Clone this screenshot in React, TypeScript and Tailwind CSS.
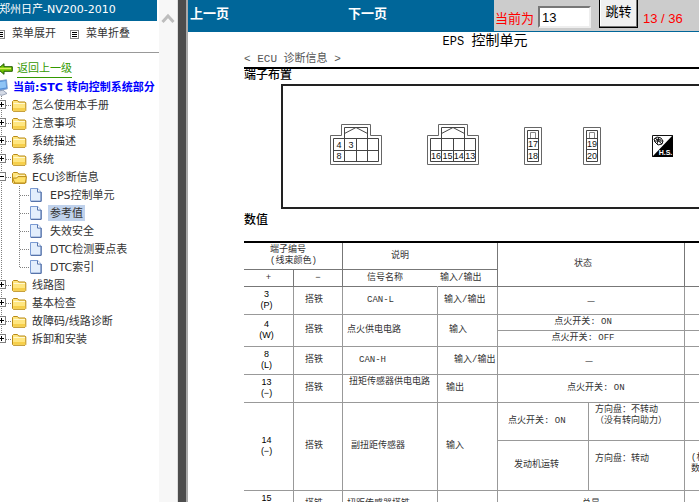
import { ReactNode, useState } from 'react';
import clsx from 'clsx';

const sections = ['怎么使用本手册', '注意事项', '系统描述', '系统', 'ECU诊断信息', '线路图', '基本检查', '故障码/线路诊断', '拆卸和安装'];
const ecuPages = ['EPS控制单元', '参考值', '失效安全', 'DTC检测要点表', 'DTC索引'];

function MenuIcon() {
  return (
    <svg width="9" height="9" viewBox="0 0 9 9" className="shrink-0" shapeRendering="crispEdges">
      <rect x="0.5" y="0.5" width="8" height="8" fill="#fff" stroke="#888" />
      <path d="M2 2.5h5M2 4.5h5M2 6.5h5" stroke="#000" />
    </svg>
  );
}

function BackIcon() {
  return (
    <svg width="16" height="12" viewBox="0 0 16 12" className="-ml-[3px] shrink-0">
      <path d="M7 .7v3h8.3v4.6H7v3L.8 6z" fill="#6fc400" stroke="#1f5a00" />
      <path d="M3 5.5h11" stroke="#d8f25a" strokeWidth="1.5" />
    </svg>
  );
}

function ComputerIcon() {
  return (
    <svg width="12" height="17" viewBox="0 0 12 17" className="-ml-1 shrink-0">
      <path d="M0 2.5 10.5.8l.8 9L0 12z" fill="#4f8ed8" stroke="#7c9fd0" />
      <path d="M1 3.5 9.6 2l.5 6.5L1 10z" fill="#8fc4f5" />
      <path d="M2 12.2l5-1 4 3.3-5 1.8-5-1z" fill="#d5dbe6" stroke="#8490a8" strokeWidth=".8" />
    </svg>
  );
}

function Folder({ open }: { open?: boolean }) {
  return (
    <svg width="15" height="13" viewBox="0 0 15 13" className="shrink-0">
      <path d="M.5 11.5v-9l1-1h4l1.2 1.5h6.3l.8.8v7.7l-.8.8H1.3z" fill="#ffe680" stroke="#b98a16" />
      {open ? (
        <>
          <path d="M3.5 6.2h9.5v-2H5L3.5 5.5z" fill="#fff5c4" />
          <path d="M2.8 12 .6 7.1h4l1.3-1.5h8.5L13.5 12z" fill="#ffe169" stroke="#b98a16" />
        </>
      ) : (
        <>
          <path d="M1.5 4.5h11.5" stroke="#fff8cf" />
          <path d="M1.2 9h12v2.6h-12z" fill="#f7cf4a" />
        </>
      )}
    </svg>
  );
}

function PageIcon() {
  return (
    <svg width="12" height="14" viewBox="0 0 12 14" className="shrink-0">
      <path d="M.5.5h7.2l3.3 3.3v9.4H.5z" fill="#e3eefc" stroke="#7b9bd3" />
      <path d="M7.5.5v3.6H11" fill="#fff" stroke="#5575ae" />
      <path d="M11.2 4v9.4H1" fill="none" stroke="#4f6ba3" />
    </svg>
  );
}

function Branch({ open, last }: { open?: boolean; last?: boolean }) {
  return (
    <svg width="12" height="18" viewBox="0 0 12 18" className="shrink-0" shapeRendering="crispEdges">
      <path d={last ? 'M1.5 0v9' : 'M1.5 0v18'} stroke="#808080" strokeDasharray="1 1" />
      <path d="M6 9.5h6" stroke="#808080" strokeDasharray="1 1" />
      <rect x="-2.5" y="4.5" width="8" height="8" fill="#fff" stroke="#808080" />
      <path d={open ? 'M-1 8.5h5' : 'M-1 8.5h5M1.5 6v5'} stroke="#000" />
    </svg>
  );
}

function LeafBranch({ last }: { last?: boolean }) {
  return (
    <svg width="30" height="18" viewBox="0 0 30 18" className="shrink-0" shapeRendering="crispEdges">
      <path d="M1.5 0v18M20 9.5h10" stroke="#808080" strokeDasharray="1 1" />
      <path d={last ? 'M19.5 0v10' : 'M19.5 0v18'} stroke="#808080" strokeDasharray="1 1" />
    </svg>
  );
}

function Sidebar() {
  const [current, setCurrent] = useState('参考值');

  return (
    <nav className="w-[159px] shrink-0 overflow-hidden whitespace-nowrap bg-white font-['DejaVu_Sans','Noto_Sans_CJK_SC',sans-serif] text-[11px] leading-4 text-[#333]">
      <h1 className="mr-[2px] h-[21px] bg-[#006699] leading-5 text-white">
        <span className="-ml-px">郑州日产-NV200-2010</span>
      </h1>
      <div className="mb-[7px] flex h-6 items-center">
        <button className="-ml-1 flex items-center gap-[7px] pt-[2px]"><MenuIcon />菜单展开</button>
        <button className="ml-[14px] flex items-center gap-[7px] pt-[2px]"><MenuIcon />菜单折叠</button>
      </div>
      <hr className="border-[#999]" />
      <a href="#back" className="mt-[7px] flex h-[18px] items-center gap-1 text-[#339900]">
        <BackIcon />
        <span className="border-b border-[#339900]">返回上一级</span>
      </a>
      <div className="flex h-[18px] items-center gap-[5px] font-bold text-[#0000ff]">
        <ComputerIcon />
        <span className="pt-[2px]">当前:STC 转向控制系统部分</span>
      </div>
      <ul>
        {sections.map((name, i) => {
          const open = name === 'ECU诊断信息';
          return (
            <li key={name}>
              <a href="#section" className="flex h-[18px] items-center">
                <Branch open={open} last={i === sections.length - 1} />
                <Folder open={open} />
                <span className="ml-[5px] pt-[2px] leading-[14px]">{name}</span>
              </a>
              {open && (
                <ul>
                  {ecuPages.map((page, j) => (
                    <li key={page}>
                      <a href="#page" onClick={() => setCurrent(page)} className="flex h-[18px] items-center">
                        <LeafBranch last={j === ecuPages.length - 1} />
                        <PageIcon />
                        <span className={clsx('ml-[6px] px-[2px] pt-[2px] leading-[14px]', page === current && 'bg-[#c0d2ec]')}>
                          {page}
                        </span>
                      </a>
                    </li>
                  ))}
                </ul>
              )}
            </li>
          );
        })}
      </ul>
    </nav>
  );
}

function TopBar() {
  return (
    <header className="grid h-8 grid-cols-[158px_148px_1fr] bg-[#006699] font-['Liberation_Sans','Noto_Sans_CJK_SC',sans-serif] text-[13px]">
      <a href="#prev" className="pl-[2px] leading-7 font-bold text-white">上一页</a>
      <a href="#next" className="pl-[2px] leading-7 font-bold text-white">下一页</a>
      <form className="mb-px flex items-start overflow-hidden whitespace-nowrap bg-[#cccccc] text-[#ff0000]">
        <label htmlFor="page" className="ml-px w-[43px] pt-[9px] leading-5">当前为</label>
        <input
          id="page"
          defaultValue="13"
          className="mt-[6px] h-[22px] w-[53px] border-2 border-t-[#777] border-r-[#eee] border-b-[#eee] border-l-[#777] bg-white px-[2px] text-black"
        />
        <button
          type="button"
          className="ml-2 h-7 w-[39px] border border-t-0 border-black bg-[#f0f0f0] pb-1 text-black shadow-[inset_-1px_-1px_0_#777,inset_1px_0_0_#fff]"
        >
          跳转
        </button>
        <span className="ml-[5px] pt-[9px] leading-5">13 / 36</span>
      </form>
    </header>
  );
}

function WideConnector({ top, bottom }: { top: string[]; bottom: string[] }) {
  return (
    <svg width="52" height="41" viewBox="0 0 52 41" fill="none" stroke="#444" className="font-['Liberation_Sans',sans-serif] text-[9px]">
      <path d="M.5 40.5v-29h11V.5h29v11h11v29z" stroke="#666" />
      <path d="M3.5 14.5h45v23h-45zM3.5 26.5h45M14.5 3.5v34M26.5 14.5v23M37.5 3.5v34M14.5 3.5h23" />
      <path d="M14.5 9.5 26 3.5l11.5 6" />
      <g fill="#111" stroke="none" textAnchor="middle">
        {top.map((t, i) => <text key={i} x={9 + i * 12} y="23.5">{t}</text>)}
        {bottom.map((t, i) => <text key={i} x={9 + i * 11.4} y="35">{t}</text>)}
      </g>
    </svg>
  );
}

function NarrowConnector({ pins }: { pins: string[] }) {
  return (
    <svg width="18" height="38" viewBox="0 0 18 38" fill="none" stroke="#444" className="font-['Liberation_Sans',sans-serif] text-[9px]">
      <path d="M.5.5h17v37H.5z" stroke="#666" />
      <path d="M3.5 3.5h11v31h-11zM3.5 11.5h11M3.5 22.5h11" />
      <path d="M6.5 11V5.5h5V11" stroke="#888" />
      <g fill="#111" stroke="none" textAnchor="middle">
        <text x="9" y="20">{pins[0]}</text>
        <text x="9" y="32">{pins[1]}</text>
      </g>
    </svg>
  );
}

function HarnessSide() {
  return (
    <svg width="21" height="22" viewBox="0 0 21 22" className="mb-2 ml-[51px]">
      <path d="M.5.5h20v21H.5z" fill="#fff" stroke="#111" />
      <path d="M21 0v22H0z" fill="#000" />
      <path d="M2 4l3-2 4 1 2 3-1 3-4 1-3-3zM3 3l7 6M7 2 5 9M2 6h9M4 4l5 1" fill="none" stroke="#111" />
      <text x="13.5" y="19.5" textAnchor="middle" fill="#fff" className="font-['Liberation_Sans',sans-serif] text-[7px] font-bold">H.S.</text>
    </svg>
  );
}

type CellProps = { children?: ReactNode; className?: string; colSpan?: number; rowSpan?: number };

function Cell({ className, ...rest }: CellProps) {
  return <td className={clsx('border-r border-b border-[#999]', className)} {...rest} />;
}

function Head({ className, ...rest }: CellProps) {
  return <th className={clsx('border-r border-b border-[#777] font-normal', className)} {...rest} />;
}

function Terminal({ pin, wire, rowSpan }: { pin: string; wire?: string; rowSpan?: number }) {
  return (
    <>
      <Cell rowSpan={rowSpan} className="pr-1 pb-[2px] text-center font-['Liberation_Sans',sans-serif] leading-[11px] text-black">
        {pin}
        <br />
        {wire}
      </Cell>
      <Cell rowSpan={rowSpan} className="pl-[11px]">搭铁</Cell>
    </>
  );
}

function ValueTable() {
  return (
    <table className="w-full table-fixed border-separate border-spacing-0 border-t-2 border-black text-left text-[9px] leading-[11px] whitespace-nowrap text-[#333]">
      <colgroup>
        <col className="w-[50px]" />
        <col className="w-[49px]" />
        <col className="w-[95px]" />
        <col className="w-[60px]" />
        <col className="w-[91px]" />
        <col className="w-[96px]" />
        <col />
      </colgroup>
      <thead>
        <tr className="h-[27px]">
          <Head colSpan={2} className="pl-[26px]">端子编号<br />(线束颜色)</Head>
          <Head colSpan={2} className="pl-12">说明</Head>
          <Head colSpan={2} rowSpan={2} className="pr-4 text-center">状态</Head>
          <Head rowSpan={2} />
        </tr>
        <tr className="h-[17px]">
          <Head className="text-center">+</Head>
          <Head className="text-center">−</Head>
          <Head className="border-r-transparent pl-6">信号名称</Head>
          <Head className="pl-[2px]">输入/输出</Head>
        </tr>
      </thead>
      <tbody>
        <tr className="h-[28px]">
          <Terminal pin="3" wire="(P)" />
          <Cell className="pl-6">CAN-L</Cell>
          <Cell className="pl-[6px]">输入/输出</Cell>
          <Cell colSpan={2} className="text-center font-['Noto_Sans_CJK_SC',sans-serif]">—</Cell>
          <Cell />
        </tr>
        <tr className="h-4">
          <Terminal pin="4" wire="(W)" rowSpan={2} />
          <Cell rowSpan={2} className="pl-1">点火供电电路</Cell>
          <Cell rowSpan={2} className="pl-[11px]">输入</Cell>
          <Cell colSpan={2} className="pr-4 text-center">点火开关: ON</Cell>
          <Cell />
        </tr>
        <tr className="h-4">
          <Cell colSpan={2} className="pr-4 text-center">点火开关: OFF</Cell>
          <Cell />
        </tr>
        <tr className="h-[28px]">
          <Terminal pin="8" wire="(L)" />
          <Cell className="pl-4">CAN-H</Cell>
          <Cell className="pl-4">输入/输出</Cell>
          <Cell colSpan={2} className="pr-1 text-center font-['Noto_Sans_CJK_SC',sans-serif]">—</Cell>
          <Cell />
        </tr>
        <tr className="h-[28px]">
          <Terminal pin="13" wire="(−)" />
          <Cell className="pb-3 pl-[6px]">扭矩传感器供电电路</Cell>
          <Cell className="pl-2">输出</Cell>
          <Cell colSpan={2} className="pl-[69px]">点火开关: ON</Cell>
          <Cell />
        </tr>
        <tr className="h-[38px]">
          <Terminal pin="14" wire="(−)" rowSpan={2} />
          <Cell rowSpan={2} className="pl-2">副扭距传感器</Cell>
          <Cell rowSpan={2} className="pl-2">输入</Cell>
          <Cell className="pl-[10px]">点火开关: ON</Cell>
          <Cell className="pb-3 pl-[6px]">方向盘：不转动<br />（没有转向助力）</Cell>
          <Cell />
        </tr>
        <tr className="h-[50px]">
          <Cell className="pl-4">发动机运转</Cell>
          <Cell className="pb-3 pl-[6px]">方向盘：转动</Cell>
          <Cell className="pb-1 pl-[6px]">(根据转向<br />数值变化)</Cell>
        </tr>
        <tr className="h-[28px]">
          <Terminal pin="15" wire="(−)" />
          <Cell className="pl-1">扭距传感器搭铁</Cell>
          <Cell />
          <Cell colSpan={2} className="text-center">总是</Cell>
          <Cell />
        </tr>
      </tbody>
    </table>
  );
}

function Manual() {
  return (
    <article className="min-w-[594px] font-['Liberation_Mono','Noto_Sans_CJK_SC',monospace] text-black">
      <h2 className="text-center text-[14px] leading-[18px]">
        <span className="text-[12px]">EPS </span>控制单元
      </h2>
      <div className="pl-14">
        <p className="border-b-2 border-black text-[11px] leading-4 text-[#555]">&lt; ECU 诊断信息 &gt;</p>
        <h3 className="text-[12px] leading-[15px] font-medium">端子布置</h3>
        <div className="ml-[37px] flex h-[125px] items-end border-2 border-[#222] pb-[42px] pl-[47px]">
          <WideConnector top={['4', '3']} bottom={['8']} />
          <span className="w-[45px]" />
          <WideConnector top={[]} bottom={['16', '15', '14', '13']} />
          <span className="w-[45px]" />
          <NarrowConnector pins={['17', '18']} />
          <span className="w-[41px]" />
          <NarrowConnector pins={['19', '20']} />
          <HarnessSide />
        </div>
        <h3 className="pt-1 pb-3 text-[12px] leading-4 font-medium">数值</h3>
        <ValueTable />
      </div>
    </article>
  );
}

export default function App() {
  return (
    <div className="flex h-screen overflow-hidden bg-white">
      <Sidebar />
      <div className="w-[18px] shrink-0 bg-[#f7f7f7] pt-[13px]">
        <svg width="14" height="11" viewBox="0 0 14 11" className="ml-[2px]">
          <path d="M1.5 9 7 3l5.5 6" fill="none" stroke="#bdbdbd" strokeWidth="3" />
        </svg>
      </div>
      <div className="w-[11px] shrink-0 border-r-2 border-l border-l-[#ddd] border-r-[#aaa] bg-[#4d4d4d]" />
      <main className="min-w-0 flex-1 overflow-hidden">
        <TopBar />
        <Manual />
      </main>
    </div>
  );
}
